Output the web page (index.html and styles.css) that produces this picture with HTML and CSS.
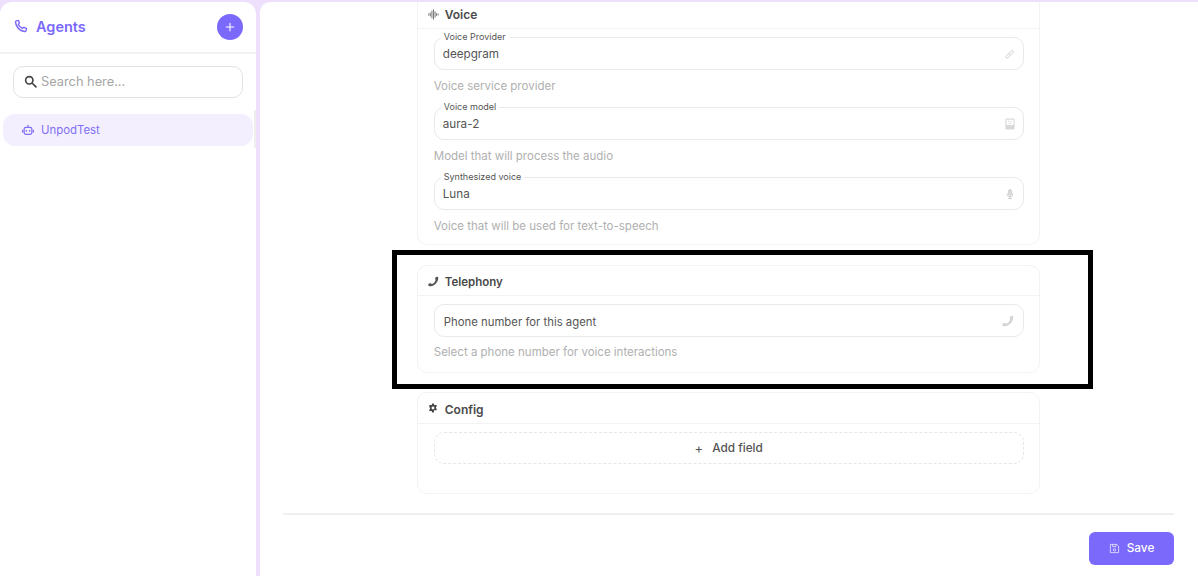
FILE: index.html
```html
<!DOCTYPE html>
<html lang="en">
<head>
<meta charset="utf-8">
<title>Agents</title>
<link rel="stylesheet" href="styles.css">
</head>
<body>
<div class="app">
  <aside class="sidebar">
    <header class="side-head">
      <div class="side-title">
        <svg class="i-phone" viewBox="0 0 24 24" fill="none" stroke="currentColor" stroke-width="2.400" stroke-linecap="round" stroke-linejoin="round"><path d="M6.600 2.500 3.400 3.600C2.600 4 2.400 5 2.600 6 4 13.800 10.200 20 18 21.400c1 .2 2-.1 2.400-.9l1-3c.2-.6 0-1.100-.5-1.400l-3.700-1.700c-.5-.2-1-.1-1.400.3l-1.300 1.500c-3-1.300-6-4.200-7.300-7.300l1.500-1.300c.4-.4.5-.9.300-1.400L7.800 3c-.2-.4-.7-.7-1.200-.5Z"/></svg>
        <span>Agents</span>
      </div>
      <button class="add-btn" type="button" aria-label="Add agent">
        <svg viewBox="0 0 12 12" fill="none" stroke="#fff" stroke-width="1.300" stroke-linecap="round"><path d="M6 1.500v9M1.500 6h9"/></svg>
      </button>
    </header>
    <div class="search">
      <svg class="i-search" viewBox="0 0 16 16" fill="none" stroke="#444" stroke-width="2" stroke-linecap="round"><circle cx="6.500" cy="6.500" r="4.500"/><path d="m10.200 10.200 4.500 4.500"/></svg>
      <span>Search here...</span>
    </div>
    <div class="agent-item">
      <svg class="i-bot" viewBox="0 0 14 14" fill="none" stroke="currentColor" stroke-width="1.400"><rect x="2.500" y="4" width="9" height="8" rx="2"/><path d="M7 4V1.500M.8 7v2.500M13.200 7v2.500" stroke-linecap="round"/><path d="M5 7.500v1M9 7.500v1" stroke-linecap="round"/></svg>
      <span>UnpodTest</span>
    </div>
    <i class="side-scroll"></i>
  </aside>

  <main class="main">
    <section class="card card-cut">
      <h2 class="card-head card-head-voice">
        <svg class="i-head" viewBox="0 0 14 14" fill="none" stroke="#555" stroke-width="1" stroke-linecap="round"><path d="M1 6v2M3 5v4M5 2.500v9M7 1v12M9 3.500v7M11 5.500v3M13 6.500v1"/></svg>
        Voice
      </h2>
      <div class="card-body">
        <div class="field">
          <label class="float">Voice Provider</label>
          <span class="value">deepgram</span>
          <svg class="i-field" viewBox="0 0 12 12" fill="none" stroke="#ccc" stroke-width="1.100"><path d="M1.500 8.500 7.800 2.200a1.500 1.500 0 0 1 2 2L3.500 10.500a1.400 1.400 0 0 1-2-2Z"/><path d="m4.500 5.500 2 2"/></svg>
        </div>
        <p class="help">Voice service provider</p>
        <div class="field">
          <label class="float">Voice model</label>
          <span class="value">aura-2</span>
          <svg class="i-field i-field-tall" viewBox="0 0 12 14"><path fill="#d8d8d8" d="M1.500 .5h9c.5 0 1 .5 1 1v11c0 .5-.5 1-1 1h-9c-.5 0-1-.5-1-1v-11c0-.5.5-1 1-1Z"/><path fill="#fff" d="M1.800 1.800h8.400v6.400H1.800z"/><path stroke="#d0d0d0" d="M3.500 4h1.500M7 4h1.500M4.500 6.200h3"/></svg>
        </div>
        <p class="help">Model that will process the audio</p>
        <div class="field">
          <label class="float">Synthesized voice</label>
          <span class="value">Luna</span>
          <svg class="i-field" viewBox="0 0 12 12" fill="none" stroke="#ccc" stroke-width="1.100" stroke-linecap="round"><rect x="4.200" y=".8" width="3.600" height="6.600" rx="1.800" fill="#ddd"/><path d="M2.500 5.800a3.500 3.500 0 0 0 7 0M6 9.300v2M4.200 11.300h3.600"/></svg>
        </div>
        <p class="help help-last">Voice that will be used for text-to-speech</p>
      </div>
    </section>

    <section class="card card-tele">
      <h2 class="card-head card-head-low card-head-tele">
        <svg class="i-head" viewBox="0 0 12 12"><path fill="#555" d="M8.600 1.200 10.300.8c.6 0 .9.300.9.900.1 4.900-3.500 9-8.200 9.500l-1.400.1c-.6 0-1-.3-1-.8l-.2-1.200c-.1-.5.2-.9.700-1l1.500-.3c.3 0 .6 0 .8.300l.5.500C6.500 8 8 6.100 8.200 4.300l-.3-.7c-.2-.3-.1-.6 0-.8l.2-1c.1-.3.2-.5.500-.6Z"/></svg>
        Telephony
      </h2>
      <div class="card-body">
        <div class="field">
          <span class="value value-sm">Phone number for this agent</span>
          <svg class="i-field i-field-lg" viewBox="0 0 12 12"><path fill="#d4d4d4" d="M8.600 1.200 10.300.8c.6 0 .9.300.9.900.1 4.900-3.500 9-8.200 9.500l-1.400.1c-.6 0-1-.3-1-.8l-.2-1.200c-.1-.5.2-.9.700-1l1.500-.3c.3 0 .6 0 .8.300l.5.500C6.500 8 8 6.100 8.200 4.300l-.3-.7c-.2-.3-.1-.6 0-.8l.2-1c.1-.3.2-.5.500-.6Z"/></svg>
        </div>
        <p class="help help-last help-tele">Select a phone number for voice interactions</p>
      </div>
    </section>

    <section class="card card-config">
      <h2 class="card-head card-head-low card-head-config">
        <svg class="i-head i-gear" viewBox="0 0 24 24"><path fill="#444" fill-rule="evenodd" d="M10 1h4l.7 3.100 1.800 1 3-1 2 3.500-2.300 2.100v2.600l2.300 2.100-2 3.500-3-1-1.800 1L14 23h-4l-.7-3.100-1.800-1-3 1-2-3.500 2.300-2.100v-2.600L2.500 7.600l2-3.500 3 1 1.800-1L10 1Zm2 7.500a3.500 3.500 0 1 0 0 7 3.500 3.500 0 0 0 0-7Z"/></svg>
        Config
      </h2>
      <div class="card-body">
        <button class="add-field" type="button"><span class="plus">+</span>Add field</button>
      </div>
    </section>

    <footer class="actions">
      <button class="save" type="button">
        <svg viewBox="0 0 12 12" fill="none" stroke="#fff" stroke-width=".9" opacity=".85"><path d="M1.500 1.500h7l2 2v7h-9z"/><path d="M4 1.500v2.500h3.500V1.500"/><circle cx="6" cy="7.500" r="1.300"/></svg>
        Save
      </button>
    </footer>
  </main>
</div>
<div class="highlight"></div>
</body>
</html>
```
FILE: styles.css
```css
* { box-sizing: border-box; }
html, body { margin: 0; height: 100%; overflow: hidden; }
body {
  background: #eee0fd;
  font-family: Inter, "Liberation Sans", sans-serif;
  color: #333;
}
.app {
  display: flex;
  height: 576px;
  padding-top: 2px;
  gap: 4px;
}
.sidebar {
  position: relative;
  flex: 0 0 255.500px;
  background: #fff;
  border-radius: 12px 12px 0 0;
}
.side-head {
  display: flex;
  align-items: center;
  justify-content: space-between;
  height: 52px;
  padding: 0 13px 0 14px;
  border-bottom: 2px solid #f1f0f2;
}
.side-title {
  display: flex;
  align-items: center;
  gap: 8px;
  padding-bottom: 2px;
  color: #7a69fb;
  font-size: 14.500px;
  font-weight: 600;
}
.i-phone { width: 14px; height: 14px; }
.add-btn {
  display: flex;
  align-items: center;
  justify-content: center;
  width: 26px;
  height: 26px;
  padding: 0;
  border: 0;
  border-radius: 50%;
  background: #7a69fb;
}
.add-btn svg { width: 10px; height: 10px; }
.search {
  display: flex;
  align-items: center;
  gap: 4px;
  height: 32px;
  margin: 12px 13px 0;
  padding: 0 10px 1px;
  border: 1px solid #e2e2e4;
  border-radius: 10px;
  color: #a6a6a6;
  font-size: 12.800px;
}
.i-search { width: 13px; height: 13px; }
.agent-item {
  display: flex;
  align-items: center;
  gap: 7px;
  height: 32px;
  margin: 16px 3px 0;
  padding: 0 0 1px 19px;
  border-radius: 12px;
  background: #f3effe;
  color: #7f70f5;
  font-size: 11.400px;
}
.i-bot { width: 12px; height: 12px; }
.side-scroll {
  position: absolute;
  right: 0;
  top: 108px;
  width: 2px;
  height: 38px;
  background: #eeeeee;
}
.main {
  flex: 1;
  display: flex;
  flex-direction: column;
  align-items: center;
  padding: 0 24px 0 23px;
  background: #fff;
  border-radius: 10px 0 0 0;
}
.card {
  width: 623px;
  border: 1px solid #f3f3f4;
  border-radius: 10px;
  background: #fff;
}
.card-cut {
  height: 243px;
  border-top: 0;
  border-radius: 0 0 10px 10px;
}
.card-tele { height: 108px; margin-top: 20px; }
.card-config { height: 102px; margin-top: 19px; }
.card-head {
  display: flex;
  align-items: center;
  gap: 7px;
  height: 30px;
  margin: 0;
  padding: 0 10px;
  border-bottom: 1px solid #f3f3f4;
  color: #4a4a4a;
  font-size: 11.500px;
  font-weight: 600;
}
.card-head-voice { height: 27px; padding-bottom: 2px; gap: 6px; font-size: 12px; }
.card-head-low { padding-top: 2px; }
.card-head-tele { gap: 6px; }
.card-head-config { height: 31px; font-size: 12px; }
.i-head { width: 11px; height: 11px; }
.i-gear { width: 10px; height: 10px; margin-top: -3px; }
.card-body { padding: 8px 15px 0 16px; }
.field {
  position: relative;
  display: flex;
  align-items: center;
  justify-content: space-between;
  height: 33px;
  padding: 0 8px;
  border: 1px solid #e9e9ea;
  border-radius: 10px;
}
.float {
  position: absolute;
  left: 6px;
  top: -7px;
  padding: 0 3px;
  background: #fff;
  color: #555;
  font-size: 9px;
  line-height: 12px;
}
.value { color: #555; font-size: 11.700px; }
.value-sm { font-size: 11.350px; padding: 2px 0 0 1px; }
.i-field { width: 10px; height: 10px; }
.i-field-tall { width: 10px; height: 12px; }
.i-field-lg { width: 12px; height: 12px; margin-right: 1px; }
.help {
  margin: 7.500px 0 13.500px;
  color: #b0b0b0;
  font-size: 11.500px;
  line-height: 16px;
}
.help-last { margin-bottom: 0; }
.help-tele { margin-top: 7px; }
.add-field {
  display: flex;
  align-items: center;
  justify-content: center;
  gap: 9px;
  width: 100%;
  height: 32px;
  border: 1px dashed #e6e6e6;
  border-radius: 10px;
  background: #fff;
  color: #555;
  font: 500 11.800px Inter, "Liberation Sans", sans-serif;
}
.plus { font-size: 13px; font-weight: 400; }
.actions {
  display: flex;
  justify-content: flex-end;
  align-self: stretch;
  margin-top: 19px;
  padding-top: 17px;
  border-top: 2px solid #efeff0;
}
.save {
  display: flex;
  align-items: center;
  justify-content: center;
  gap: 7px;
  width: 85px;
  height: 33px;
  padding: 0 0 1px;
  border: 0;
  border-radius: 6px;
  background: #7a69fb;
  color: #fff;
  font: 500 11.800px Inter, "Liberation Sans", sans-serif;
}
.save svg { width: 11px; height: 11px; }
.highlight {
  position: absolute;
  left: 392px;
  top: 250px;
  width: 701px;
  height: 139px;
  border: 5px solid #000;
}
```
